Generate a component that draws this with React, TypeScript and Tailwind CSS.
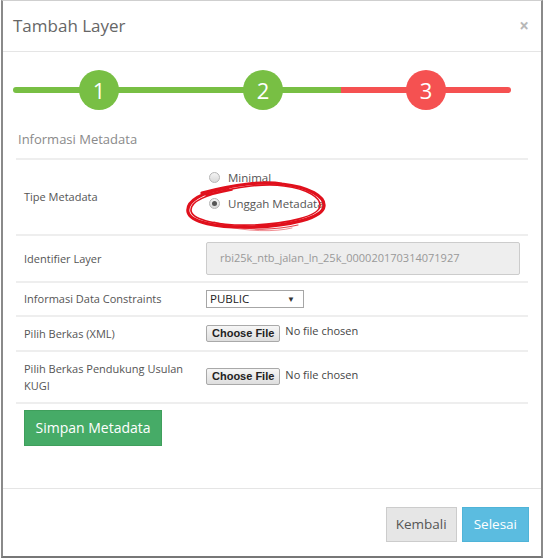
import React from "react";

const font = { fontFamily: '"Open Sans", "Noto Sans", Arial, sans-serif' };

function Step({ n, color }: { n: number; color: string }) {
  return (
    <div
      className={`relative z-10 flex h-[40px] w-[40px] items-center justify-center rounded-full text-[22px] text-white ${color}`}
    >
      {n}
    </div>
  );
}

function Radio({ checked }: { checked?: boolean }) {
  return (
    <span className="flex h-[11px] w-[11px] items-center justify-center rounded-full border border-[#b5b5b5] bg-gradient-to-b from-[#f4f4f4] to-[#d9d9d9]">
      {checked && <span className="h-[5px] w-[5px] rounded-full bg-[#555]" />}
    </span>
  );
}

function FileInput() {
  return (
    <div className="flex items-center gap-[5px]">
      <button className="h-[17px] rounded-[2px] border border-[#a9a9a9] bg-gradient-to-b from-[#f6f6f6] to-[#dedede] px-[5px] text-[11px] font-bold leading-none text-[#222]" style={{ fontFamily: "Arial, 'Liberation Sans', sans-serif" }}>
        Choose File
      </button>
      <span className="-mt-[3px] text-[11px] text-[#444]">No file chosen</span>
    </div>
  );
}

function Row({ label, children, className }: { label: React.ReactNode; children: React.ReactNode; className?: string }) {
  return (
    <div className={`flex items-center border-b-2 border-[#eeeeee] ${className ?? ""}`}>
      <div className="w-[190px] pl-[8px] text-[11px] leading-[17px] text-[#555]">{label}</div>
      <div className="flex-1">{children}</div>
    </div>
  );
}

export default function App() {
  return (
    <div className="h-[560px] w-[545px] bg-white" style={font}>
      <div className="ml-[1px] flex h-[558px] w-[542px] flex-col border-x-2 border-b-2 border-t border-x-[#8a8a8a] border-b-[#777] border-t-[#cfcfcf]">
        {/* header */}
        <div className="flex h-[51px] items-center justify-between border-b border-[#e5e5e5] pl-[10px] pr-[12px]">
          <span className="text-[17px] text-[#666]">Tambah Layer</span>
          <span className="text-[17px] font-bold text-[#b8b8b8]">×</span>
        </div>

        {/* stepper */}
        <div className="relative mx-[10px] mt-[18px] flex h-[40px] w-[500px] items-center">
          <div className="absolute left-0 top-[17px] h-[6px] w-[330px] rounded-l-full bg-[#78bf44]" />
          <div className="absolute left-[328px] top-[17px] h-[6px] w-[170px] rounded-r-full bg-[#f55151]" />
          <div className="ml-[66px]">
            <Step n={1} color="bg-[#78bf44]" />
          </div>
          <div className="ml-[124px]">
            <Step n={2} color="bg-[#78bf44]" />
          </div>
          <div className="ml-[123px]">
            <Step n={3} color="bg-[#f55151]" />
          </div>
        </div>

        {/* body */}
        <div className="relative mx-[13px] mt-[20px] flex-1">
          <div className="border-b-2 border-[#eeeeee] pb-[8px] pl-[2px] text-[13px] text-[#8a8a8a]">Informasi Metadata</div>

          <Row label="Tipe Metadata" className="h-[76px]">
            <div className="flex flex-col gap-[9px] pb-[12px] pl-[3px] text-[11.5px] text-[#555]">
              <div className="flex items-center gap-[8px]">
                <Radio />
                <span>Minimal</span>
              </div>
              <div className="flex items-center gap-[8px]">
                <Radio checked />
                <span>Unggah Metadata</span>
              </div>
            </div>
          </Row>

          <Row label="Identifier Layer" className="h-[47px]">
            <div className="mr-[8px] flex h-[33px] items-center rounded-[2px] border border-[#cccccc] bg-[#eeeeee] pl-[13px] text-[11px] text-[#999]">
              rbi25k_ntb_jalan_ln_25k_000020170314071927
            </div>
          </Row>

          <Row label="Informasi Data Constraints" className="h-[34px]">
            <div className="flex h-[18px] w-[98px] items-center justify-between border border-[#a6a6a6] bg-white pl-[3px] pr-[8px] text-[11.5px] text-[#222]">
              <span>PUBLIC</span>
              <span className="text-[8px] text-[#333]">▼</span>
            </div>
          </Row>

          <Row label="Pilih Berkas (XML)" className="h-[35px]">
            <FileInput />
          </Row>

          <Row label={<>Pilih Berkas Pendukung Usulan<br />KUGI</>} className="h-[52px]">
            <FileInput />
          </Row>

          <div className="pl-[8px] pt-[6px]">
            <button className="h-[36px] w-[138px] border border-[#3f9f5c] bg-[#46ab67] text-[14px] text-white">Simpan Metadata</button>
          </div>

          {/* hand-drawn red ellipse */}
          <svg className="pointer-events-none absolute left-[164px] top-[43px]" width="150" height="62" viewBox="0 0 150 62">
            <path d="M22 20 C55 11 85 8 102 11 C130 14 145 24 144 33 C143 45 110 53 72 54 C36 55 10 49 8 39 C6 28 22 19 48 15" fill="none" stroke="#e0101c" strokeWidth="3.2" strokeLinecap="round" />
            <path d="M26 22 C58 13 88 10 104 13 C128 16 141 25 140 33 C139 43 108 51 72 52 C38 53 13 47 11 38 C10 29 24 22 52 17" fill="none" stroke="#e0101c" strokeWidth="1.6" strokeLinecap="round" />
            <path d="M34 49 C62 57 92 58 118 52" fill="none" stroke="#e0101c" strokeWidth="1.2" strokeLinecap="round" opacity="0.8" />
            <path d="M40 52 C66 59 96 59 112 55" fill="none" stroke="#e0101c" strokeWidth="0.8" strokeLinecap="round" opacity="0.6" />
          </svg>
        </div>

        {/* footer */}
        <div className="flex h-[68px] items-center justify-end gap-[5px] border-t border-[#e5e5e5] pr-[12px] pt-[3px]">
          <button className="h-[35px] border border-[#cccccc] bg-[#e6e6e6] px-[9px] text-[13.5px] text-[#555]">Kembali</button>
          <button className="h-[35px] border border-[#4fb4d8] bg-[#5bbce0] px-[11px] text-[13.5px] text-white">Selesai</button>
        </div>
      </div>
    </div>
  );
}
